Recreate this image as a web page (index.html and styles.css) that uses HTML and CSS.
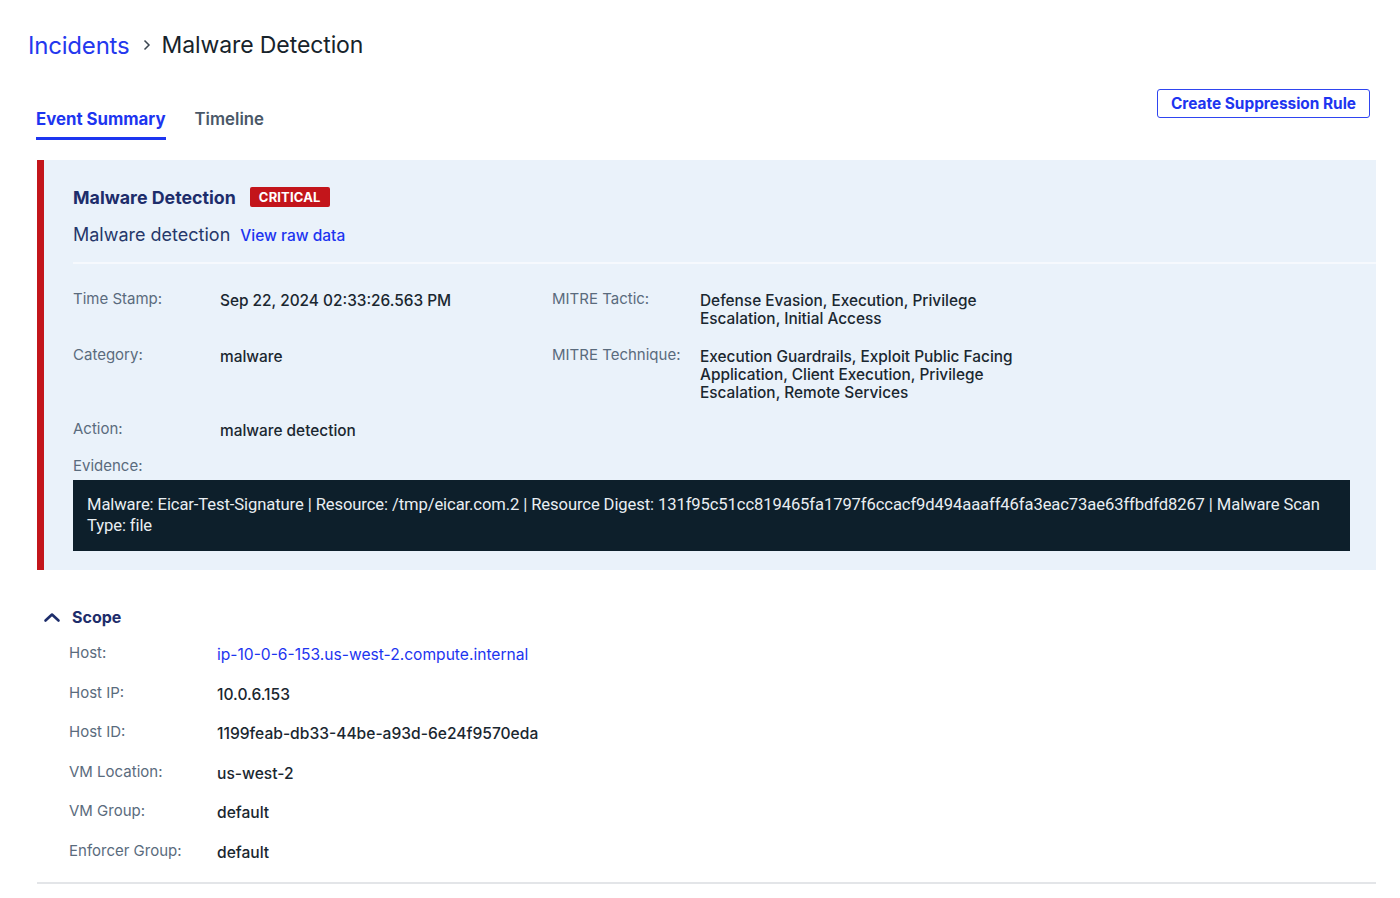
FILE: index.html
```html
<!DOCTYPE html>
<html lang="en">
<head>
<meta charset="utf-8">
<title>Malware Detection</title>
<link rel="stylesheet" href="styles.css">
</head>
<body>
<div class="page">
  <nav class="crumbs">
    <a class="crumb-link" href="#">Incidents</a>
    <svg class="crumb-sep" width="12" height="14" viewBox="0 0 12 14"><path d="M3.5 2.5 L8 7 L3.5 11.5" fill="none" stroke="#3b4650" stroke-width="1.5"/></svg>
    <span class="crumb-current">Malware Detection</span>
  </nav>

  <div class="tabbar">
    <div class="tabs">
      <span class="tab active">Event Summary</span>
      <span class="tab">Timeline</span>
    </div>
    <button class="btn-outline">Create Suppression Rule</button>
  </div>

  <section class="event">
    <div class="event-head">
      <div class="title-row">
        <h2 class="event-title">Malware Detection</h2>
        <span class="badge">CRITICAL</span>
      </div>
      <div class="sub-row">
        <span class="event-sub">Malware detection</span>
        <a class="raw-link" href="#">View raw data</a>
      </div>
    </div>
    <div class="event-body">
      <div class="facts">
        <div class="lbl">Time Stamp:</div>
        <div class="val">Sep 22, 2024 02:33:26.563 PM</div>
        <div class="lbl">MITRE Tactic:</div>
        <div class="val">Defense Evasion, Execution, Privilege Escalation, Initial Access</div>

        <div class="lbl">Category:</div>
        <div class="val">malware</div>
        <div class="lbl">MITRE Technique:</div>
        <div class="val">Execution Guardrails, Exploit Public Facing Application, Client Execution, Privilege Escalation, Remote Services</div>

        <div class="lbl">Action:</div>
        <div class="val">malware detection</div>
        <div></div>
        <div></div>
      </div>
      <div class="lbl evidence-lbl">Evidence:</div>
      <div class="evidence">Malware: Eicar-Test-Signature | Resource: /tmp/eicar.com.2 | Resource Digest: 131f95c51cc819465fa1797f6ccacf9d494aaaff46fa3eac73ae63ffbdfd8267 | Malware Scan Type: file</div>
    </div>
  </section>

  <section class="scope">
    <div class="scope-head">
      <svg class="chev" width="18" height="12" viewBox="0 0 18 12"><path d="M2.5 9.5 L9 3.5 L15.5 9.5" fill="none" stroke="#1d2d6b" stroke-width="2.6" stroke-linecap="round" stroke-linejoin="round"/></svg>
      <span class="scope-title">Scope</span>
    </div>
    <div class="scope-grid">
      <div class="lbl">Host:</div><div class="val"><a class="host-link" href="#">ip-10-0-6-153.us-west-2.compute.internal</a></div>
      <div class="lbl">Host IP:</div><div class="val">10.0.6.153</div>
      <div class="lbl">Host ID:</div><div class="val">1199feab-db33-44be-a93d-6e24f9570eda</div>
      <div class="lbl">VM Location:</div><div class="val">us-west-2</div>
      <div class="lbl">VM Group:</div><div class="val">default</div>
      <div class="lbl">Enforcer Group:</div><div class="val">default</div>
    </div>
  </section>
</div>
</body>
</html>
```

FILE: styles.css
```css
* { box-sizing: border-box; }
html, body { margin: 0; padding: 0; background: #ffffff; }
body {
  font-family: Inter, "Liberation Sans", sans-serif;
  color: #1c2a33;
  -webkit-font-smoothing: antialiased;
}
a { text-decoration: none; }

.page {
  width: 1400px;
  padding: 30px 24px 0 37px;
}

.crumbs {
  display: flex;
  align-items: center;
  margin-left: -9px;
  height: 30px;
}
.crumb-link { color: #2438ee; font-size: 24px; font-weight: 400; letter-spacing: -0.2px; }
.crumb-sep { margin: 0 9px 0 11px; }
.crumb-current { color: #17232b; font-size: 23px; font-weight: 400; letter-spacing: -0.1px; }

.tabbar {
  display: flex;
  justify-content: space-between;
  align-items: flex-start;
  margin-top: 29px;
}
.tabs {
  display: flex;
  gap: 29px;
  padding-top: 20px;
  margin-left: -1px;
}
.tab {
  font-size: 16.8px;
  line-height: 20px;
  font-weight: 600;
  color: #4a5868;
  padding-bottom: 8px;
  border-bottom: 3px solid transparent;
}
.tab.active {
  color: #1d35f0;
  font-weight: 700;
  border-bottom-color: #1d35f0;
}
.btn-outline {
  margin-right: 6px;
  background: #fff;
  border: 1.5px solid #2f45f0;
  border-radius: 3px;
  color: #1d35f0;
  font-family: Inter, "Liberation Sans", sans-serif;
  font-size: 15.4px;
  font-weight: 700;
  height: 29px;
  padding: 0 13px;
  cursor: pointer;
}

.event {
  margin-top: 20px;
  width: 1339px;
  background: #eaf2fa;
  border-left: 7px solid #c3151b;
  padding-bottom: 19px;
}
.event-head {
  padding: 26px 0 0 29px;
}
.title-row {
  display: flex;
  align-items: center;
  gap: 14px;
  height: 22px;
}
.event-title {
  margin: 0;
  font-size: 17.8px;
  font-weight: 700;
  color: #1d2d6b;
}
.badge {
  background: #c3151b;
  color: #ffffff;
  font-size: 13px;
  font-weight: 700;
  padding: 2px 9px;
  border-radius: 2px;
  letter-spacing: 0.15px;
}
.sub-row {
  display: flex;
  align-items: baseline;
  gap: 10px;
  margin-top: 16px;
  padding-bottom: 17px;
  border-bottom: 2px solid #f6f9fd;
}
.event-sub { font-size: 18px; color: #26386a; font-weight: 400; }
.raw-link { font-size: 15.5px; color: #1d35f0; font-weight: 500; }

.event-body {
  padding: 28px 26px 0 29px;
}
.facts {
  display: grid;
  grid-template-columns: 147px 332px 148px 330px;
  row-gap: 20px;
}
.lbl {
  font-size: 15px;
  line-height: 18px;
  color: #5a6b7d;
  margin-top: -2px;
}
.val {
  font-size: 15.4px;
  line-height: 18px;
  font-weight: 500;
  color: #1a2730;
}
.evidence-lbl { margin-top: 17px; }
.evidence {
  margin-top: 5px;
  background: #0d1f2b;
  color: #e9eef2;
  font-family: Roboto, "Liberation Sans Narrow", sans-serif;
  font-size: 16.6px;
  line-height: 21px;
  letter-spacing: -0.1px;
  padding: 14px 14px 15px;
  min-height: 71px;
}

.scope {
  margin-top: 37px;
  width: 1339px;
  border-bottom: 2px solid #e3e5e8;
  padding-bottom: 20px;
}
.scope-head {
  display: flex;
  align-items: center;
  gap: 11px;
  padding-left: 6px;
}
.chev { display: block; }
.scope-title { font-size: 16px; font-weight: 700; color: #1d2d6b; }
.scope-grid {
  margin-top: 19px;
  padding-left: 32px;
  display: grid;
  grid-template-columns: 148px auto;
  row-gap: 21.6px;
}
.scope-grid .val { font-size: 15.6px; }
.host-link { color: #1d35f0; font-weight: 400; }
```
